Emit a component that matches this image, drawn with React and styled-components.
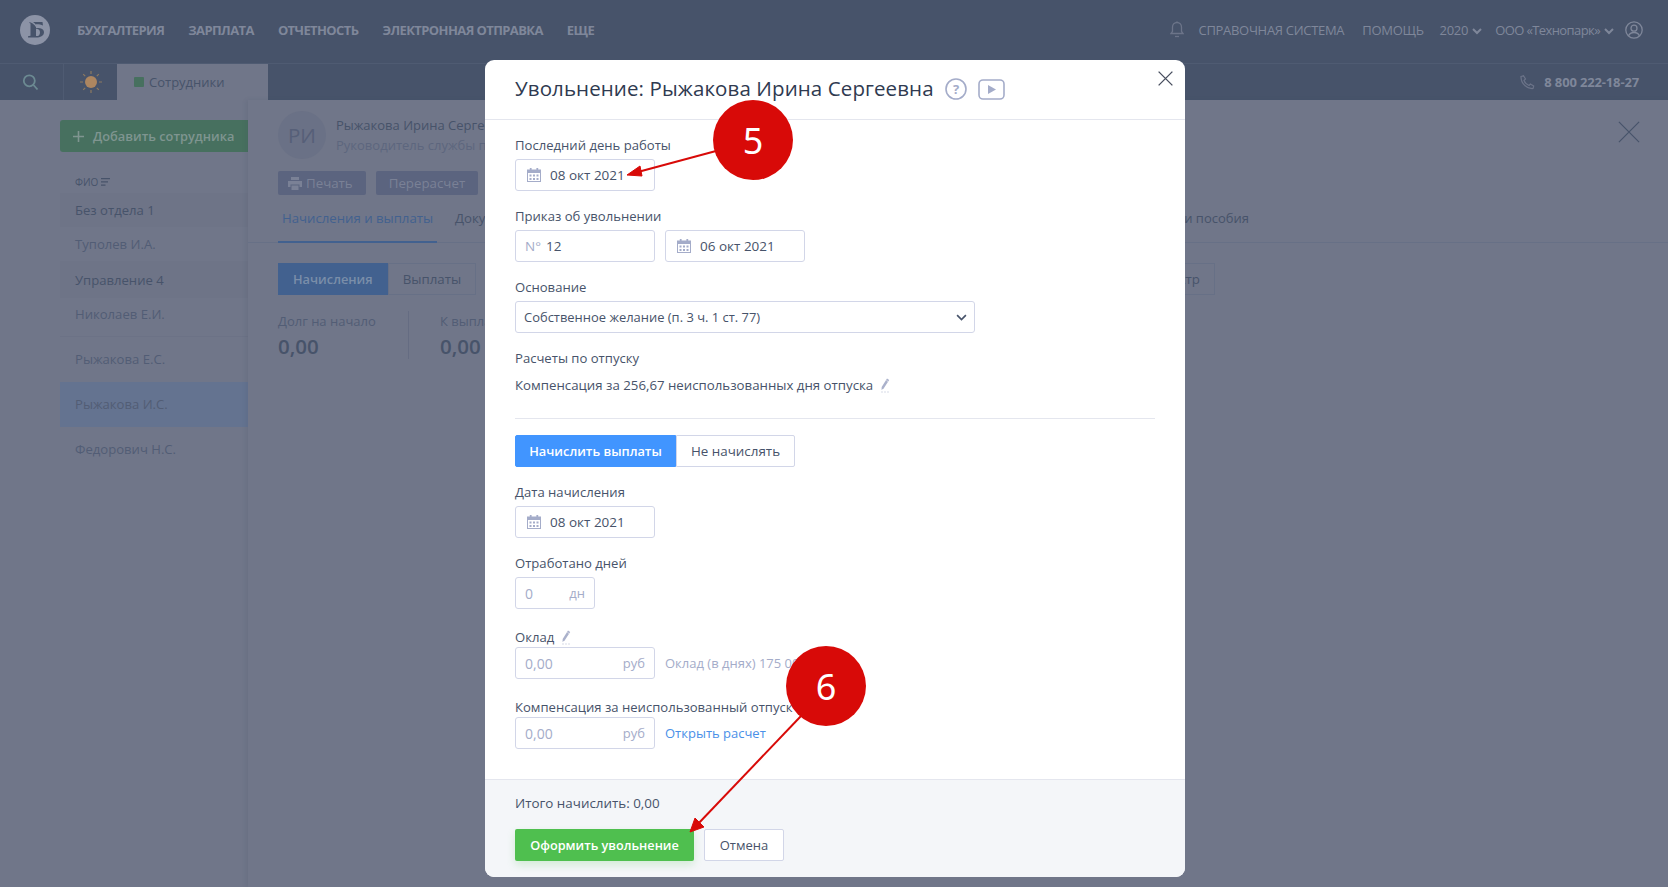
import React from 'react';
import styled, { createGlobalStyle } from 'styled-components';

const FONT = '"Open Sans", "Noto Sans", "Liberation Sans", sans-serif';

const Global = createGlobalStyle`
  html, body { margin: 0; padding: 0; height: 100%; }
  body { font-family: ${FONT}; background: #707689; overflow: hidden; }
  * { box-sizing: border-box; }
`;

const Page = styled.div`
  position: relative;
  width: 1668px;
  height: 887px;
  overflow: hidden;
  color: #47536a;
`;

/* ---------- dimmed app behind the modal ---------- */

const TopBar = styled.div`
  height: 64px;
  background: #47536a;
  border-bottom: 1px solid #4f5b72;
  display: flex;
  align-items: center;
  padding: 0 25px 4px 20px;
`;

const NavLink = styled.span`
  font-size: 13px;
  font-weight: ${p => (p.$light ? 400 : 700)};
  letter-spacing: ${p => (p.$plain ? -0.6 : p.$light ? -0.3 : -0.6)}px;
  text-transform: ${p => (p.$plain ? 'none' : 'uppercase')};
  color: #7f879a;
  margin-left: ${p => p.$ml || 24}px;
  white-space: nowrap;
  display: inline-flex;
  align-items: center;
  gap: 4px;
`;

const NavGroup = styled.div`
  display: flex;
  align-items: center;
  margin-left: auto;
`;

const NavChevron = styled.span`
  display: inline-flex;
  margin-top: 3px;
`;

const TabBar = styled.div`
  height: 36px;
  background: #47536a;
  display: flex;
  align-items: stretch;
  padding-right: 29px;
`;

const SearchCell = styled.div`
  width: 64px;
  display: flex;
  align-items: center;
  justify-content: center;
  padding-right: 3px;
  border-right: 1px solid #4f5b72;
  color: #6c8a92;
`;

const SunCell = styled.div`
  width: 53px;
  display: flex;
  align-items: center;
  justify-content: center;
`;

const Tab = styled.div`
  width: 151px;
  background: #707689;
  display: flex;
  align-items: center;
  padding-left: 17px;
  font-size: 13px;
  color: #47536a;
  gap: 5px;
`;

const TabDot = styled.span`
  width: 10px;
  height: 10px;
  border-radius: 1px;
  background: #47705f;
`;

const Phone = styled.div`
  margin-left: auto;
  display: flex;
  align-items: center;
  gap: 9px;
  font-size: 13px;
  font-weight: 700;
  letter-spacing: -0.15px;
  color: #7f879a;
`;

const Body = styled.div`
  display: flex;
  height: 787px;
`;

const Side = styled.div`
  width: 248px;
  padding: 20px 0 0 60px;
  flex: none;
`;

const AddButton = styled.div`
  height: 32px;
  background: #47705f;
  border-radius: 3px 0 0 3px;
  color: #7f9590;
  font-size: 12.8px;
  font-weight: 600;
  display: flex;
  align-items: center;
  padding-left: 13px;
  gap: 9px;
  white-space: nowrap;
`;

const SideHead = styled.div`
  margin: 22px 0 3px 15px;
  font-size: 10px;
  display: flex;
  align-items: center;
  gap: 3px;
  height: 16px;
`;

const SideRow = styled.div`
  height: ${p => p.$h || 34}px;
  padding: 0 0 ${p => p.$pb || 0}px 15px;
  display: flex;
  align-items: center;
  font-size: 13.1px;
  font-weight: ${p => (p.$group ? 500 : 400)};
  color: ${p => (p.$group ? '#47536a' : '#525d75')};
  background: ${p => (p.$active ? '#647390' : p.$group ? '#6e7487' : 'transparent')};
  border-bottom: ${p => (p.$line ? '1px solid #6c7286' : 'none')};
`;

const Main = styled.div`
  flex: 1;
  padding: 11px 0 0 30px;
  position: relative;
  box-shadow: -2px 0 4px rgba(60, 70, 90, 0.12);
`;

const PanelClose = styled.div`
  position: absolute;
  right: 28px;
  top: 21px;
  color: #47536a;
  line-height: 0;
`;

const Person = styled.div`
  display: flex;
  align-items: center;
  gap: 10px;
`;

const Avatar = styled.div`
  width: 48px;
  height: 48px;
  border-radius: 50%;
  background: #6a7186;
  color: #565f78;
  font-size: 20.5px;
  display: flex;
  align-items: center;
  justify-content: center;
`;

const PersonName = styled.div`
  font-size: 13px;
  font-weight: 500;
  line-height: 20px;
`;

const PersonRole = styled.div`
  font-size: 13px;
  line-height: 20px;
  color: #5d667e;
`;

const Actions = styled.div`
  display: flex;
  gap: 10px;
  margin-top: 12px;
`;

const ActionButton = styled.div`
  height: 24px;
  background: #5b647f;
  border-radius: 2px;
  color: #7a8196;
  font-size: 13.3px;
  padding: 0 13px 0 ${p => p.$pl || 13}px;
  display: flex;
  align-items: center;
  gap: 4px;
`;

const Tabs = styled.div`
  display: flex;
  margin: 12px 0 0 -30px;
  padding: 0 31px 0 30px;
  height: 36px;
  border-bottom: 1px solid #677086;
`;

const TabLink = styled.div`
  font-size: 13.2px;
  font-weight: ${p => (p.$on ? 500 : 400)};
  height: 36px;
  padding: 2px 4px 0;
  margin-right: 14px;
  color: ${p => (p.$on ? '#42618f' : '#47536a')};
  border-bottom: ${p => (p.$on ? '2px solid #42618f' : 'none')};
  white-space: nowrap;
`;

const TabEnd = styled.div`
  margin-left: auto;
  padding: 2px 388px 0 0;
  font-size: 13px;
  font-weight: 500;
`;

const Toggles = styled.div`
  display: flex;
  margin-top: 20px;
  padding-right: 453px;
`;

const Toggle = styled.div`
  height: 32px;
  padding: 0 14px;
  font-size: ${p => (p.$on ? 12.8 : 13.3)}px;
  font-weight: ${p => (p.$on ? 600 : 400)};
  display: flex;
  align-items: center;
  background: ${p => (p.$on ? '#42618f' : 'transparent')};
  color: ${p => (p.$on ? '#7a8ea9' : '#47536a')};
  border: 1px solid ${p => (p.$on ? '#42618f' : '#677086')};
  margin-left: ${p => (p.$push ? 'auto' : 0)};
`;

const Stats = styled.div`
  display: flex;
  margin-top: 16px;
`;

const Stat = styled.div`
  width: ${p => p.$w}px;
  height: 48px;
  border-right: ${p => (p.$line ? '1px solid #656c82' : 'none')};
  margin-right: ${p => p.$gap || 0}px;
`;

const StatLabel = styled.div`
  font-size: 13px;
  line-height: 20px;
  color: #525d75;
`;

const StatValue = styled.div`
  font-size: 20.5px;
  font-weight: 600;
  line-height: 30px;
`;

/* ---------- modal ---------- */

const Modal = styled.div`
  position: absolute;
  left: 485px;
  top: 60px;
  width: 700px;
  height: 817px;
  background: #fff;
  border-radius: 9px;
  display: flex;
  flex-direction: column;
  color: #47536a;
  overflow: hidden;
`;

const ModalHead = styled.div`
  height: 60px;
  flex: none;
  border-bottom: 1px solid #e4e6ee;
  display: flex;
  align-items: center;
  padding: 0 30px 1px;
  position: relative;
`;

const Title = styled.h1`
  margin: 0 0 2px;
  font-size: 20.5px;
  font-weight: 400;
  color: #2f3a50;
  letter-spacing: 0.1px;
  white-space: nowrap;
`;

const ModalClose = styled.div`
  position: absolute;
  right: 12px;
  top: 11px;
  line-height: 0;
  color: #4a5060;
`;

const HeadIcons = styled.div`
  display: flex;
  align-items: center;
  gap: 11px;
  margin-left: 11px;
  color: #a4acc9;
`;

const ModalBody = styled.div`
  flex: 1;
  padding: 15px 30px 0;
`;

const Label = styled.div`
  font-size: 13.1px;
  line-height: 20px;
  height: 20px;
  white-space: nowrap;
  display: flex;
  align-items: center;
  gap: 7px;
`;

const Field = styled.div`
  margin-bottom: ${p => p.$mb ?? 15}px;
`;

const Row = styled.div`
  display: flex;
  align-items: center;
  gap: 10px;
  margin-top: ${p => p.$mt ?? 4}px;
`;

const Input = styled.div`
  width: ${p => p.$w || 140}px;
  height: 32px;
  border: 1px solid #d2d6e8;
  border-radius: 3px;
  display: flex;
  align-items: center;
  padding: 0 ${p => p.$pr ?? 9}px 0 ${p => p.$pl ?? 9}px;
  font-size: ${p => (p.$size ? p.$size : p.$muted ? 14 : 13.5)}px;
  color: ${p => (p.$muted ? '#a4acc9' : '#47536a')};
  gap: ${p => p.$gap ?? 5}px;
  white-space: nowrap;
`;

const Unit = styled.span`
  margin-left: auto;
  font-size: 13px;
  color: #a4acc9;
`;

const Prefix = styled.span`
  color: #a4acc9;
`;

const Hint = styled.span`
  font-size: 13px;
  color: #a4acc9;
  white-space: nowrap;
`;

const LinkText = styled.a`
  font-size: 13px;
  color: #4a90e8;
  white-space: nowrap;
`;

const Note = styled.div`
  font-size: 13.25px;
  line-height: 20px;
  display: flex;
  align-items: center;
  gap: 7px;
  margin-top: 7px;
`;

const Divider = styled.div`
  height: 1px;
  background: #e4e6ee;
  margin: 23px 0 16px;
`;

const Switch = styled.div`
  display: flex;
  margin-bottom: 15px;
`;

const SwitchBtn = styled.div`
  height: 32px;
  width: ${p => p.$w}px;
  font-size: ${p => (p.$on ? 12.8 : 13.4)}px;
  font-weight: ${p => (p.$on ? 600 : 500)};
  display: flex;
  align-items: center;
  justify-content: center;
  color: ${p => (p.$on ? '#fff' : '#47536a')};
  background: ${p => (p.$on ? '#4195ff' : '#fff')};
  border: 1px solid ${p => (p.$on ? '#4195ff' : '#d2d6e8')};
  border-radius: ${p => (p.$on ? '2px 0 0 2px' : '0 2px 2px 0')};
  white-space: nowrap;
`;

const ModalFoot = styled.div`
  height: 98px;
  flex: none;
  background: #f4f6f9;
  border-top: 1px solid #e4e6ee;
  padding: 13px 30px 0;
`;

const Total = styled.div`
  font-size: 13.4px;
  font-weight: 500;
  line-height: 20px;
`;

const FootRow = styled.div`
  display: flex;
  gap: 10px;
  margin-top: 16px;
`;

const SubmitBtn = styled.button`
  height: 32px;
  width: 179px;
  padding: 0;
  border: 0;
  border-radius: 2px;
  background: #4fbf4f;
  color: #fff;
  font: 600 12.7px ${FONT};
  box-shadow: 0 4px 8px rgba(79, 191, 79, 0.2);
`;

const CancelBtn = styled.button`
  height: 32px;
  width: 80px;
  padding: 0;
  border: 1px solid #d2d6e8;
  border-radius: 2px;
  background: #fff;
  color: #47536a;
  font: 500 13px ${FONT};
`;

/* ---------- red annotations ---------- */

const Marker = styled.div`
  position: absolute;
  left: ${p => p.$x - 40}px;
  top: ${p => p.$y - 40}px;
  width: 80px;
  height: 80px;
  border-radius: 50%;
  background: #d80a08;
  color: #fff;
  font-size: 36px;
  display: flex;
  align-items: center;
  justify-content: center;
  font-family: "Noto Sans", sans-serif;
`;

const Arrows = styled.svg`
  position: absolute;
  left: 0;
  top: 0;
  pointer-events: none;
`;

/* ---------- icons ---------- */

const Logo = () => (
  <svg width="30" height="30" viewBox="0 0 30 30">
    <circle cx="15" cy="15" r="15" fill="#8c93a6" />
    <path d="M9.500 7h13l.5 3.500c-2-1-4.500-1.300-7-1.200v3.800c4-.4 8 .8 8 4.200 0 3.700-4 5.200-7.500 5.200H8v-1.200l2.500-.5V8.500L9.500 8z" fill="#47536a" />
    <path d="M16 13.800v7.200c2.500.2 4-1 4-3.600 0-2.700-2-3.800-4-3.600z" fill="#8c93a6" />
    <path d="M6 5.500c5 .5 9 3 11 7" fill="none" stroke="#8c93a6" strokeWidth="1.300" />
  </svg>
);

const Calendar = () => (
  <svg width="14" height="14" viewBox="0 0 14 14" fill="#a4acc9">
    <rect x="2.800" y="0" width="1.800" height="3" />
    <rect x="9.400" y="0" width="1.800" height="3" />
    <path d="M0 1.500h14V14H0zM1 5v8h12V5z" />
    <path d="M2.500 6.500h2v2h-2zM6 6.500h2v2H6zM9.500 6.500h2v2h-2zM2.500 10h2v2h-2zM6 10h2v2H6zM9.500 10h2v2h-2z" />
  </svg>
);

const Pencil = () => (
  <svg width="10" height="15" viewBox="0 0 10 15" fill="none">
    <path d="M7 .5 9.200 2 3.800 10.200 1.500 12l.2-3z" fill="#aab1cb" />
    <path d="M6.500 2.500 8 3.500" stroke="#fff" strokeWidth=".6" />
    <path d="M1 14h8" stroke="#d8dbe8" strokeWidth="1.200" strokeDasharray="2 1" />
  </svg>
);

const Sun = () => (
  <svg width="22" height="22" viewBox="0 0 22 22">
    <circle cx="11" cy="11" r="6" fill="#ad8660" />
    <path d="M11 0v3M11 19v3M0 11h3M19 11h3M3.200 3.200l2 2M16.800 16.800l2 2M3.200 18.800l2-2M16.800 5.200l2-2" stroke="#8e7a60" strokeWidth="1.200" />
  </svg>
);

const Chevron = ({ size = 10, color = '#7f879a', weight = 2 }) => (
  <svg width={size} height={size * 0.7} viewBox="0 0 10 7" fill="none">
    <path d="M1 1l4 4 4-4" stroke={color} strokeWidth={weight} />
  </svg>
);

const Cross = ({ size, weight = 1.500 }) => (
  <svg width={size} height={size} viewBox="0 0 24 24" fill="none">
    <path d="M1 1l22 22M23 1L1 23" stroke="currentColor" strokeWidth={weight} />
  </svg>
);

const Bell = () => (
  <svg width="14" height="17" viewBox="0 0 14 17" fill="none" stroke="#6c7489" strokeWidth="1.300">
    <path d="M1 12.500h12l-1.500-2V6a4.500 4.500 0 0 0-9 0v4.500z" />
    <path d="M5 15.500h4" />
    <path d="M7 .5v1" />
  </svg>
);

const UserIcon = () => (
  <svg width="18" height="18" viewBox="0 0 18 18" fill="none" stroke="#7f879a" strokeWidth="1.300">
    <circle cx="9" cy="9" r="8.200" />
    <circle cx="9" cy="7.200" r="3" />
    <path d="M3.500 15c1-2.800 3-3.500 5.500-3.500s4.500.7 5.500 3.500" />
  </svg>
);

const PhoneIcon = () => (
  <svg width="15" height="15" viewBox="0 0 15 15" fill="none" stroke="#6c7489" strokeWidth="1.200">
    <path d="M1 1.500 3.500.8l2 3.200L4 5.500c.8 2.200 2.600 4 5 5l1.400-1.400 3.300 2-.7 2.400C6.500 14 .8 8 1 1.500z" />
  </svg>
);

const SortIcon = () => (
  <svg width="9" height="8" viewBox="0 0 9 8" fill="#47536a">
    <path d="M0 0h9v1.300H0zM0 3.200h7v1.300H0zM0 6.400h4.500v1.300H0z" />
  </svg>
);

const PrintIcon = () => (
  <svg width="14" height="13" viewBox="0 0 14 13" fill="#7a8196">
    <path d="M3 0h8v3H3zM0 4h14v6h-2.500V7.500h-9V10H0zM3.500 8.500h7V13h-7z" />
  </svg>
);

const SearchIcon = () => (
  <svg width="17" height="17" viewBox="0 0 16 17" fill="none" stroke="currentColor" strokeWidth="1.800">
    <circle cx="6.800" cy="6.800" r="5.500" />
    <path d="M11 11l4 4.500" />
  </svg>
);

const HelpIcon = () => (
  <svg width="22" height="22" viewBox="0 0 22 22" fill="none">
    <circle cx="11" cy="11" r="10" stroke="currentColor" strokeWidth="1.600" />
    <text x="11" y="15.500" textAnchor="middle" fontSize="13" fontWeight="700" fill="currentColor" fontFamily="Open Sans, sans-serif">?</text>
  </svg>
);

const VideoIcon = () => (
  <svg width="27" height="21" viewBox="0 0 27 21" fill="none">
    <rect x="1" y="1" width="25" height="19" rx="4" stroke="currentColor" strokeWidth="1.600" />
    <path d="M10 6l8 4.500-8 4.500z" fill="currentColor" />
  </svg>
);

const SideList = () => (
  <Side>
    <AddButton>
      <svg width="11" height="11" viewBox="0 0 11 11" fill="#7f9590">
        <path d="M4.700 0h1.600v4.700H11v1.600H6.300V11H4.700V6.300H0V4.700h4.700z" />
      </svg>
      Добавить сотрудника
    </AddButton>
    <SideHead>ФИО <SortIcon /></SideHead>
    <SideRow $group>Без отдела 1</SideRow>
    <SideRow>Туполев И.А.</SideRow>
    <SideRow $group $h={37}>Управление 4</SideRow>
    <SideRow $line $h={39} $pb={7}>Николаев Е.И.</SideRow>
    <SideRow $h={45} $pb={2}>Рыжакова Е.С.</SideRow>
    <SideRow $active $h={45} $pb={2}>Рыжакова И.С.</SideRow>
    <SideRow $h={45} $pb={2}>Федорович Н.С.</SideRow>
  </Side>
);

const Employee = () => (
  <Main>
    <PanelClose><Cross size={22} weight={1.300} /></PanelClose>
    <Person>
      <Avatar>РИ</Avatar>
      <div>
        <PersonName>Рыжакова Ирина Сергеевна</PersonName>
        <PersonRole>Руководитель службы персонала</PersonRole>
      </div>
    </Person>
    <Actions>
      <ActionButton $pl={10}><PrintIcon /> Печать</ActionButton>
      <ActionButton>Перерасчет</ActionButton>
    </Actions>
    <Tabs>
      <TabLink $on>Начисления и выплаты</TabLink>
      <TabLink>Документы</TabLink>
      <TabEnd>Больничные и пособия</TabEnd>
    </Tabs>
    <Toggles>
      <Toggle $on>Начисления</Toggle>
      <Toggle>Выплаты</Toggle>
      <Toggle $push>Реестр</Toggle>
    </Toggles>
    <Stats>
      <Stat $w={131} $line $gap={31}>
        <StatLabel>Долг на начало</StatLabel>
        <StatValue>0,00</StatValue>
      </Stat>
      <Stat $w={131}>
        <StatLabel>К выплате</StatLabel>
        <StatValue>0,00</StatValue>
      </Stat>
    </Stats>
  </Main>
);

const DateInput = ({ value }) => (
  <Input $pl={11} $gap={9}>
    <Calendar />
    {value}
  </Input>
);

const Dismissal = () => (
  <Modal>
    <ModalHead>
      <Title>Увольнение: Рыжакова Ирина Сергеевна</Title>
      <HeadIcons><HelpIcon /><VideoIcon /></HeadIcons>
      <ModalClose><Cross size={15} weight={2.200} /></ModalClose>
    </ModalHead>
    <ModalBody>
      <Field>
        <Label>Последний день работы</Label>
        <Row><DateInput value="08 окт 2021" /></Row>
      </Field>
      <Field>
        <Label>Приказ об увольнении</Label>
        <Row>
          <Input><Prefix>N°</Prefix> 12</Input>
          <DateInput value="06 окт 2021" />
        </Row>
      </Field>
      <Field>
        <Label>Основание</Label>
        <Row>
          <Input $w={460} $pl={8} $pr={7} $size={12.95}>
            Собственное желание (п. 3 ч. 1 ст. 77)
            <Unit><Chevron size={11} color="#47536a" weight={1.500} /></Unit>
          </Input>
        </Row>
      </Field>
      <Label>Расчеты по отпуску</Label>
      <Note>Компенсация за 256,67 неиспользованных дня отпуска <Pencil /></Note>
      <Divider />
      <Switch>
        <SwitchBtn $on $w={161}>Начислить выплаты</SwitchBtn>
        <SwitchBtn $w={119}>Не начислять</SwitchBtn>
      </Switch>
      <Field>
        <Label>Дата начисления</Label>
        <Row><DateInput value="08 окт 2021" /></Row>
      </Field>
      <Field $mb={18}>
        <Label>Отработано дней</Label>
        <Row><Input $w={80} $muted>0<Unit>дн</Unit></Input></Row>
      </Field>
      <Field $mb={18}>
        <Label>Оклад <Pencil /></Label>
        <Row $mt={0}>
          <Input $muted>0,00<Unit>руб</Unit></Input>
          <Hint>Оклад (в днях) 175 000,00</Hint>
        </Row>
      </Field>
      <Field>
        <Label>Компенсация за неиспользованный отпуск</Label>
        <Row $mt={0}>
          <Input $muted>0,00<Unit>руб</Unit></Input>
          <LinkText>Открыть расчет</LinkText>
        </Row>
      </Field>
    </ModalBody>
    <ModalFoot>
      <Total>Итого начислить: 0,00</Total>
      <FootRow>
        <SubmitBtn>Оформить увольнение</SubmitBtn>
        <CancelBtn>Отмена</CancelBtn>
      </FootRow>
    </ModalFoot>
  </Modal>
);

export default function App() {
  return (
    <Page>
      <Global />
      <TopBar>
        <Logo />
        <NavLink $ml={27}>Бухгалтерия</NavLink>
        <NavLink>Зарплата</NavLink>
        <NavLink>Отчетность</NavLink>
        <NavLink>Электронная отправка</NavLink>
        <NavLink>Еще</NavLink>
        <NavGroup>
          <Bell />
          <NavLink $light $ml={15}>Справочная система</NavLink>
          <NavLink $light $ml={18}>Помощь</NavLink>
          <NavLink $light $ml={16}>2020 <NavChevron><Chevron /></NavChevron></NavLink>
          <NavLink $light $ml={13} $plain>ООО «Технопарк» <NavChevron><Chevron /></NavChevron></NavLink>
          <NavLink $light $ml={11}><UserIcon /></NavLink>
        </NavGroup>
      </TopBar>
      <TabBar>
        <SearchCell><SearchIcon /></SearchCell>
        <SunCell><Sun /></SunCell>
        <Tab><TabDot />Сотрудники</Tab>
        <Phone><PhoneIcon />8 800 222-18-27</Phone>
      </TabBar>
      <Body>
        <SideList />
        <Employee />
      </Body>
      <Dismissal />
      <Marker $x={753} $y={140}>5</Marker>
      <Marker $x={826} $y={686}>6</Marker>
      <Arrows width="1668" height="887" viewBox="0 0 1668 887">
        <path d="M716 151 636 172.500" stroke="#d80a08" strokeWidth="2" />
        <path d="M627 175 640 166 642 176z" fill="#d80a08" stroke="#d80a08" />
        <path d="M801 716 697 825" stroke="#d80a08" strokeWidth="2" />
        <path d="M690 832 695 818 704 827z" fill="#d80a08" stroke="#d80a08" />
      </Arrows>
    </Page>
  );
}
